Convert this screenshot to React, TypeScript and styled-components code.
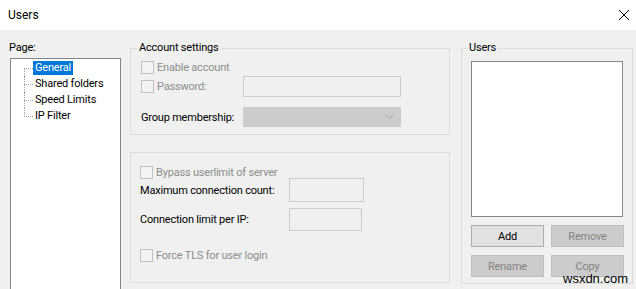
import React from 'react';
import styled, { createGlobalStyle } from 'styled-components';

const GlobalStyle = createGlobalStyle`
  html, body {
    margin: 0;
    padding: 0;
    background: #f0f0f0;
  }
  body {
    font-family: Roboto, "Liberation Sans", sans-serif;
    font-size: 11px;
    letter-spacing: -0.2px;
    color: #000;
  }
`;

const Window = styled.div`
  position: relative;
  width: 636px;
  height: 289px;
  overflow: hidden;
  background: #f0f0f0;
`;

const TitleBar = styled.div`
  height: 30px;
  background: #fff;
  display: flex;
  align-items: center;
  justify-content: space-between;
  padding: 0 3px 0 8px;
  box-sizing: border-box;
`;

const Title = styled.span`
  font-size: 12px;
  letter-spacing: 0;
  margin-top: -1px;
`;

const CloseIcon = styled.svg`
  width: 12px;
  height: 12px;
  margin-right: 3px;
  margin-top: -1px;
`;

const Body = styled.div`
  display: flex;
  padding-left: 10px;
`;

const LeftColumn = styled.div`
  width: 111px;
  padding-top: 10px;
  flex: none;
`;

const PageLabel = styled.div`
  line-height: 16px;
  margin-bottom: 2px;
  margin-left: -1px;
`;

const TreeBox = styled.div`
  height: 240px;
  box-sizing: border-box;
  border: 1px solid #828790;
  background: #fff;
  padding-top: 1px;
`;

const TreeRow = styled.div`
  display: flex;
  align-items: center;
  height: 16px;
  padding-left: 13px;
`;

type Pos = 'first' | 'mid' | 'last';

const Connector = styled.span<{ $pos: Pos }>`
  position: relative;
  width: 9px;
  height: 16px;
  flex: none;

  &::before {
    content: '';
    position: absolute;
    left: 0;
    top: ${(p) => (p.$pos === 'first' ? '8px' : '0')};
    bottom: ${(p) => (p.$pos === 'last' ? '7px' : '0')};
    border-left: 1px dotted #a0a0a0;
  }

  &::after {
    content: '';
    position: absolute;
    left: 0;
    right: 0;
    top: 8px;
    border-top: 1px dotted #a0a0a0;
  }
`;

const TreeLabel = styled.span<{ $selected?: boolean }>`
  padding: 0 2px;
  line-height: 14px;
  white-space: nowrap;
  background: ${(p) => (p.$selected ? '#0078d7' : 'transparent')};
  color: ${(p) => (p.$selected ? '#fff' : '#000')};
`;

const MiddleColumn = styled.div`
  width: 320px;
  margin-left: 9px;
  padding-top: 11px;
  flex: none;
  display: flex;
  flex-direction: column;
  gap: 17px;
`;

const RightColumn = styled.div`
  width: 172px;
  margin-left: 11px;
  padding-top: 11px;
  flex: none;
`;

const GroupBox = styled.fieldset<{ $pad: string }>`
  margin: 0;
  min-width: 0;
  border: 1px solid #dcdcdc;
  padding: ${(p) => p.$pad};
  box-sizing: border-box;
`;

const Legend = styled.legend<{ $offset: number }>`
  padding: 0 2px;
  margin-left: ${(p) => p.$offset}px;
  line-height: 14px;
`;

const Row = styled.div<{ $h: number; $mt?: number }>`
  display: flex;
  align-items: center;
  height: ${(p) => p.$h}px;
  margin-top: ${(p) => p.$mt ?? 0}px;
`;

const Label = styled.span<{ $w?: number; $disabled?: boolean }>`
  width: ${(p) => (p.$w ? `${p.$w}px` : 'auto')};
  flex: none;
  white-space: nowrap;
  color: ${(p) => (p.$disabled ? '#8d8d8d' : '#000')};
`;

const CheckBox = styled.span`
  width: 13px;
  height: 13px;
  box-sizing: border-box;
  border: 1px solid #c2c2c2;
  background: #f3f3f3;
  margin-right: 3px;
  flex: none;
`;

const TextBox = styled.div<{ $w: number; $h: number }>`
  width: ${(p) => p.$w}px;
  height: ${(p) => p.$h}px;
  box-sizing: border-box;
  border: 1px solid #cccccc;
  background: #f0f0f0;
  flex: none;
`;

const ComboBox = styled.div`
  width: 158px;
  height: 20px;
  box-sizing: border-box;
  border: 1px solid #cccccc;
  background: #cccccc;
  display: flex;
  align-items: center;
  justify-content: flex-end;
  padding-right: 6px;
  flex: none;
`;

const ListBox = styled.div`
  width: 152px;
  height: 156px;
  box-sizing: border-box;
  border: 1px solid #828790;
  background: #fff;
`;

const ButtonGrid = styled.div`
  display: grid;
  grid-template-columns: 73px 73px;
  column-gap: 7px;
  row-gap: 8px;
  margin-top: 8px;
`;

const Button = styled.button<{ $disabled?: boolean }>`
  height: 22px;
  box-sizing: border-box;
  margin: 0;
  padding: 0;
  font-family: inherit;
  font-size: 11px;
  letter-spacing: -0.2px;
  border: 1px solid ${(p) => (p.$disabled ? '#bfbfbf' : '#adadad')};
  background: ${(p) => (p.$disabled ? '#cccccc' : '#e1e1e1')};
  color: ${(p) => (p.$disabled ? '#838383' : '#000')};
`;

const Watermark = styled.div`
  position: absolute;
  left: 563px;
  top: 272px;
  font-family: "Liberation Sans", Arial, sans-serif;
  font-size: 13px;
  letter-spacing: 0;
  line-height: 14px;
  color: #000;
`;

const pages: { name: string; pos: Pos }[] = [
  { name: 'General', pos: 'first' },
  { name: 'Shared folders', pos: 'mid' },
  { name: 'Speed Limits', pos: 'mid' },
  { name: 'IP Filter', pos: 'last' },
];

export default function App() {
  return (
    <Window>
      <GlobalStyle />
      <TitleBar>
        <Title>Users</Title>
        <CloseIcon viewBox="0 0 12 12">
          <path d="M1 1 L11 11 M11 1 L1 11" stroke="#000" strokeWidth="1" fill="none" />
        </CloseIcon>
      </TitleBar>

      <Body>
        <LeftColumn>
          <PageLabel>Page:</PageLabel>
          <TreeBox>
            {pages.map((p, i) => (
              <TreeRow key={p.name}>
                <Connector $pos={p.pos} />
                <TreeLabel $selected={i === 0}>{p.name}</TreeLabel>
              </TreeRow>
            ))}
          </TreeBox>
        </LeftColumn>

        <MiddleColumn>
          <GroupBox $pad="4px 10px 7px 10px">
            <Legend $offset={-4}>Account settings</Legend>
            <Row $h={17}>
              <CheckBox />
              <Label $disabled>Enable account</Label>
            </Row>
            <Row $h={21}>
              <CheckBox />
              <Label $disabled $w={86}>Password:</Label>
              <TextBox $w={158} $h={21} />
            </Row>
            <Row $h={20} $mt={10}>
              <Label $w={102}>Group membership:</Label>
              <ComboBox>
                <svg width="9" height="6" viewBox="0 0 9 6">
                  <polyline points="0.5,0.5 4.5,4.5 8.5,0.5" stroke="#a6a6a6" strokeWidth="1" fill="none" />
                </svg>
              </ComboBox>
            </Row>
          </GroupBox>

          <GroupBox $pad="13px 9px 20px 9px">
            <Row $h={12}>
              <CheckBox />
              <Label $disabled>Bypass userlimit of server</Label>
            </Row>
            <Row $h={24}>
              <Label $w={149}>Maximum connection count:</Label>
              <TextBox $w={75} $h={24} />
            </Row>
            <Row $h={23} $mt={6}>
              <Label $w={149}>Connection limit per IP:</Label>
              <TextBox $w={73} $h={23} />
            </Row>
            <Row $h={14} $mt={17}>
              <CheckBox />
              <Label $disabled>Force TLS for user login</Label>
            </Row>
          </GroupBox>
        </MiddleColumn>

        <RightColumn>
          <GroupBox $pad="6px 9px 6px 9px">
            <Legend $offset={-4}>Users</Legend>
            <ListBox />
            <ButtonGrid>
              <Button>Add</Button>
              <Button $disabled>Remove</Button>
              <Button $disabled>Rename</Button>
              <Button $disabled>Copy</Button>
            </ButtonGrid>
          </GroupBox>
        </RightColumn>
      </Body>

      <Watermark>wsxdn.com</Watermark>
    </Window>
  );
}
